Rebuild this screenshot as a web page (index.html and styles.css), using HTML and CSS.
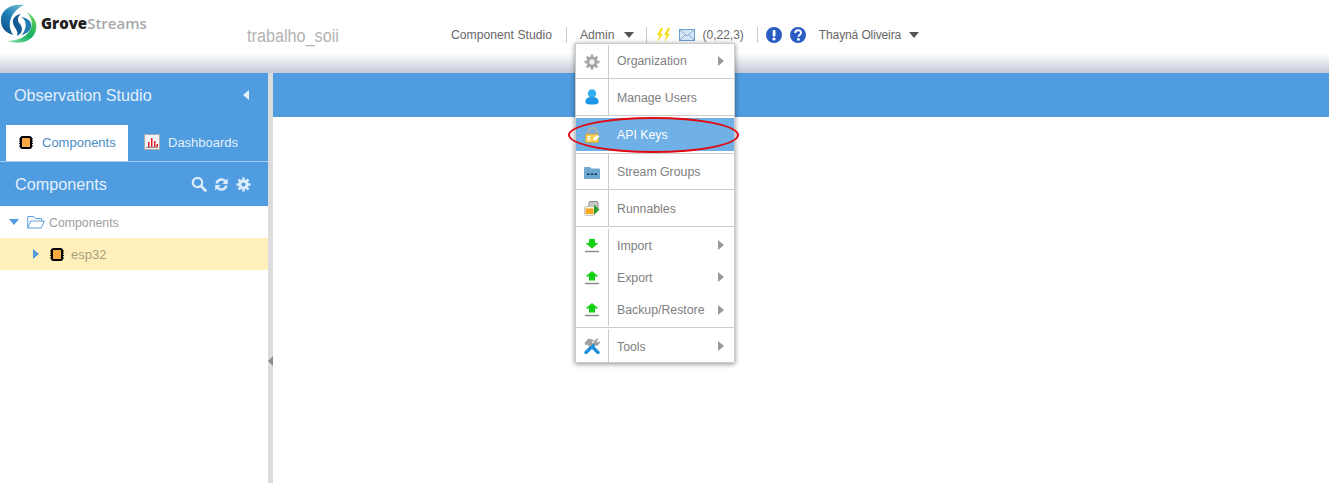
FILE: index.html
```html
<!DOCTYPE html>
<html>
  <head>
    <meta charset="utf-8">
    <title>GroveStreams</title>
    <link rel="stylesheet" href="styles.css">
  </head>
  <body>
    <div class="top">
      <div class="logo">
        <svg width="38" height="42" viewBox="0 0 38 42">
          <defs>
            <linearGradient id="swirlBlue" x1="0.800" y1="0" x2="0.200" y2="1">
              <stop offset="0" stop-color="#6fb9c8"/>
              <stop offset=".45" stop-color="#1c7fb8"/>
              <stop offset="1" stop-color="#0f4f86"/>
            </linearGradient>
            <linearGradient id="swirlGreen" x1="0.800" y1="0" x2="0.200" y2="1">
              <stop offset="0" stop-color="#6fd05a"/>
              <stop offset=".6" stop-color="#10b060"/>
              <stop offset="1" stop-color="#7fdca0"/>
            </linearGradient>
          </defs>
          <path d="M24 2C10 0 0 8 1 18c0 7 5 12 12 14-2-4-4-8-3-13 1-7 6-13 14-17z" fill="url(#swirlBlue)"/>
          <path d="M21 11c-6 1-9 5-8 9 1 5 6 8 4 13 6-3 6-8 3-12-3-3-3-7 1-10z" fill="#135c94"/>
          <path d="M21 14c4 2 6 7 4 12-1 3-2 5-4 6 7-1 11-6 10-11-1-4-4-6-10-7z" fill="#1f7db4"/>
          <path d="M26 9c5 4 7 10 5 16-3 8-12 13-24 13 13 4 26 1 29-11 2-8-3-15-10-18z" fill="url(#swirlGreen)"/>
        </svg>
        <span class="logo-text"><b>Grove</b>Streams</span>
      </div>
      <div class="project">trabalho_soii</div>
      <div class="topnav">
        <span>Component Studio</span>
        <i class="sep sep-a"></i>
        <span>Admin</span>
        <i class="caret caret-a"></i>
        <i class="sep sep-b"></i>
        <svg class="bolts" width="15" height="14" viewBox="0 0 15 14">
          <path d="M5 0 1 7h2.500L1 14l6-8H4.500L7 0zM12 0 8 7h2.500L8 14l6-8h-2.500L14 0z" fill="#f5dc14"/>
        </svg>
        <svg class="mail" width="16" height="12" viewBox="0 0 16 12">
          <rect x=".5" y=".5" width="15" height="11" fill="#d6e6f6" stroke="#6f9fd0"/>
          <path d="M1 1l7 6 7-6M1 11l5-5M15 11l-5-5" fill="none" stroke="#7fabd8"/>
        </svg>
        <span class="counts">(0,22,3)</span>
        <i class="sep sep-c"></i>
        <svg class="round" width="16" height="16" viewBox="0 0 16 16">
          <circle cx="8" cy="8" r="8" fill="#2a5cc4"/>
          <rect x="6.700" y="3" width="2.800" height="6.500" rx="1" fill="#fff"/>
          <circle cx="8" cy="12" r="1.600" fill="#fff"/>
        </svg>
        <svg class="round round-b" width="16" height="16" viewBox="0 0 16 16">
          <circle cx="8" cy="8" r="8" fill="#2a5cc4"/>
          <path d="M5.200 6c0-3.600 5.800-3.800 5.800-.3 0 2.300-2.500 2.200-2.500 4" fill="none" stroke="#fff" stroke-width="2"/>
          <circle cx="8.400" cy="12.400" r="1.400" fill="#fff"/>
        </svg>
        <span class="user">Thayná Oliveira</span>
        <i class="caret caret-b"></i>
      </div>
    </div>

    <div class="work">
      <div class="side">
        <div class="side-title">
          <span>Observation Studio</span>
          <i class="collapse"></i>
        </div>
        <div class="tabs">
          <div class="tab tab-on">
            <svg width="14" height="13" viewBox="0 0 14 13"><use href="#chip"/></svg>
            <span>Components</span>
          </div>
          <div class="tab">
            <svg width="16" height="16" viewBox="0 0 16 16">
              <rect x=".5" y=".5" width="15" height="15" fill="#f4f4f4" stroke="#aaa"/>
              <path d="M4 13V8h1.500v5zM7 13V4h1.500v9zM10 13V7h1.500v6zM12.500 13v-3H14v3z" fill="#d8202a"/>
              <path d="M2 13.500h12" stroke="#888"/>
            </svg>
            <span>Dashboards</span>
          </div>
        </div>
        <div class="side-head">
          <span>Components</span>
          <div class="head-tools">
            <svg width="16" height="16" viewBox="0 0 16 16">
              <circle cx="6.500" cy="6.500" r="4.700" fill="none" stroke="#dcecfa" stroke-width="2.200"/>
              <path d="M10 10l4.500 4.500" stroke="#dcecfa" stroke-width="2.800" stroke-linecap="round"/>
            </svg>
            <svg width="15" height="15" viewBox="0 0 15 15">
              <path d="M1.500 6.500A6 6 0 0 1 12 3.300L13.800 1.500V7H8.300l2-2A3.600 3.600 0 0 0 4 6.500zM13.500 8.500A6 6 0 0 1 3 11.700L1.200 13.500V8h5.500l-2 2A3.600 3.600 0 0 0 11 8.500z" fill="#dcecfa"/>
            </svg>
            <svg width="15" height="15" viewBox="0 0 15 15">
              <path d="M7.500 .5v14M.5 7.500h14M2.500 2.500l10 10M12.500 2.500l-10 10" stroke="#dcecfa" stroke-width="2.500"/>
              <circle cx="7.500" cy="7.500" r="5" fill="#dcecfa"/>
              <circle cx="7.500" cy="7.500" r="2" fill="#4f9ce0"/>
            </svg>
          </div>
        </div>
        <div class="tree-row">
          <i class="arrow-down"></i>
          <svg class="folder" width="18" height="14" viewBox="0 0 18 14">
            <path d="M.7 13V1.500h6l1.500 2h6.500V6M.7 13l3-7h13.600l-3 7z" fill="#fff" stroke="#5ba1de"/>
          </svg>
          <span class="tree-label">Components</span>
        </div>
        <div class="tree-row tree-picked">
          <i class="arrow-right"></i>
          <svg class="tree-chip" width="14" height="13" viewBox="0 0 14 13"><use href="#chip"/></svg>
          <span>esp32</span>
        </div>
      </div>
      <div class="split"><i class="split-arrow"></i></div>
      <div class="main">
        <div class="main-bar"></div>
      </div>
    </div>

    <div class="menu">
      <div class="item item-first">
        <div class="ico">
          <svg width="16" height="16" viewBox="0 0 16 16">
            <path d="M8 .5v15M.5 8h15M2.700 2.700l10.600 10.600M13.300 2.700 2.700 13.300" stroke="#a8a8a8" stroke-width="2.600"/>
            <circle cx="8" cy="8" r="5.500" fill="#a4a4a4"/>
            <circle cx="8" cy="8" r="2.700" fill="#f2f2f2"/>
          </svg>
        </div>
        <span>Organization</span><i class="more"></i>
      </div>
      <div class="item item-users">
        <div class="ico">
          <svg width="14" height="16" viewBox="0 0 14 16">
            <circle cx="7" cy="4.500" r="4.200" fill="#35aef2"/>
            <path d="M.5 14C0 10 2 8 7 8s7 2 6.500 6C11 16 3 16 .5 14z" fill="#1e97ea"/>
          </svg>
        </div>
        <span>Manage Users</span>
      </div>
      <div class="item item-keys">
        <div class="ico">
          <svg width="15" height="16" viewBox="0 0 15 16">
            <path d="M3.500 8V5a4 4 0 0 1 8 0v3" fill="none" stroke="#b4b0a2" stroke-width="2"/>
            <rect x=".5" y="7" width="13" height="8.500" rx="1" fill="#f7cf58" stroke="#c99a2a" stroke-width=".7"/>
            <path d="M2.500 9h3v1h-2v.8h2v1h-2v.8h2v1h-3zM8 13l1-2.500 3.500-2.500L14.500 9.500 11 13z" fill="#fff"/>
          </svg>
        </div>
        <span>API Keys</span>
      </div>
      <div class="item item-groups">
        <div class="ico">
          <svg width="16" height="14" viewBox="0 0 16 14">
            <path d="M0 3a1 1 0 0 1 1-1h5l1 1.500h8a1 1 0 0 1 1 1V13a1 1 0 0 1-1 1H1a1 1 0 0 1-1-1z" fill="#6ea8d0"/>
            <path d="M3 8.500h2.400V10H3zM6.800 8.500h2.400V10H6.800zM10.600 8.500H13V10h-2.400z" fill="#12304a"/>
          </svg>
        </div>
        <span>Stream Groups</span>
      </div>
      <div class="item item-runs">
        <div class="ico">
          <svg width="16" height="15" viewBox="0 0 16 15">
            <rect x="5" y=".5" width="9" height="7" rx="1" fill="#c8c8c8" stroke="#8a8a8a"/>
            <rect x=".5" y="5.500" width="10" height="9" rx="1" fill="#f9f3e0" stroke="#c8c8c8"/>
            <rect x="1.500" y="7.500" width="8" height="5.500" fill="#f7a81e"/>
            <path d="M10 3.500l5.500 5L10 14z" fill="#2da02d"/>
          </svg>
        </div>
        <span>Runnables</span>
      </div>
      <div class="item item-short item-top">
        <div class="ico">
          <svg width="14" height="15" viewBox="0 0 14 15"><path d="M4 1h6v4h3.500L7 10.500.5 5H4z" fill="#16d016"/><path d="M0 13.500h14" stroke="#888" stroke-width="1.400"/></svg>
        </div>
        <span>Import</span><i class="more"></i>
      </div>
      <div class="item item-short item-mid">
        <div class="ico">
          <svg width="14" height="15" viewBox="0 0 14 15"><path d="M7 1l6.500 5.500H10v4H4v-4H.5z" fill="#16d016"/><path d="M0 13.500h14" stroke="#888" stroke-width="1.400"/></svg>
        </div>
        <span>Export</span><i class="more"></i>
      </div>
      <div class="item item-short item-bottom">
        <div class="ico">
          <svg width="14" height="15" viewBox="0 0 14 15"><path d="M7 1l6.500 5.500H10v4H4v-4H.5z" fill="#16d016"/><path d="M0 13.500h14" stroke="#888" stroke-width="1.400"/></svg>
        </div>
        <span>Backup/Restore</span><i class="more"></i>
      </div>
      <div class="item item-last">
        <div class="ico">
          <svg width="16" height="16" viewBox="0 0 16 16">
            <path d="M2 14.500 10 6.500M14 14.500 6 6.500" stroke="#1d8fdc" stroke-width="3.400" stroke-linecap="round"/>
            <path d="M.5 5 4.500.5 10 2 8 4.500 9 6 6 9 3.500 6.500 2 7.500zM9.500 6l.5-3 3-2.500 1.500.5-2 2 1.500 1.500 1.500-1.500.5 2-3 3z" fill="#a2a2a2"/>
          </svg>
        </div>
        <span>Tools</span><i class="more"></i>
      </div>
    </div>
    <div class="ring"></div>

    <svg class="defs" width="0" height="0">
      <symbol id="chip" viewBox="0 0 14 13">
        <rect x="2" y="1" width="10" height="11" rx="1.500" fill="#f7a944" stroke="#000" stroke-width="2"/>
        <path d="M0 3h2M0 5.200h2M0 7.600h2M0 10h2M12 3h2M12 5.200h2M12 7.600h2M12 10h2" stroke="#000"/>
      </symbol>
    </svg>
  </body>
</html>
```

FILE: styles.css
```css
* {
  box-sizing: border-box;
}

html, body {
  margin: 0;
  height: 483px;
  overflow: hidden;
  background: #fff;
  font-family: "Liberation Sans", Arial, sans-serif;
  font-size: 12px;
  color: #666;
}

i {
  display: block;
  font-style: normal;
}

.defs {
  position: absolute;
}

/* top bar */
.top {
  height: 73px;
  display: flex;
  background: linear-gradient(#fff 0, #fff 53px, #c3c9d9 73px);
}

.logo {
  width: 247px;
  height: 44px;
  display: flex;
  padding-top: 3px;
}

.logo-text {
  margin: 11px 0 0 3px;
  font-family: "Open Sans", sans-serif;
  font-size: 15px;
  line-height: 18px;
  font-weight: 600;
  color: #a6a8ab;
}

.logo-text b {
  color: #222;
}

.project {
  width: 204px;
  padding-top: 25px;
  font-size: 18px;
  line-height: 22px;
  color: #b3b3b3;
  transform: scaleX(.9);
  transform-origin: left;
}

.topnav {
  height: 69px;
  display: flex;
  align-items: center;
  font-size: 12.200px;
  color: #666;
}

.sep {
  width: 1px;
  height: 16px;
  background: #c8c8c8;
}

.sep-a { margin: 0 13px 0 14px; }
.sep-b { margin: 0 9px 0 12px; }
.sep-c { margin: 0 8px 0 13px; }

.caret {
  border-top: 6px solid #555;
  border-left: 5.500px solid transparent;
  border-right: 5.500px solid transparent;
}

.caret-a { margin-left: 9px; }
.caret-b { margin-left: 8px; }

.mail { margin-left: 8px; }
.counts { margin-left: 8px; font-size: 12px; }
.round-b { margin-left: 8px; }
.user { margin-left: 13px; font-size: 12px; letter-spacing: -.12px; }

/* left panel */
.work {
  display: flex;
  height: 410px;
}

.side {
  width: 268px;
  background: #fff;
}

.side-title {
  height: 52px;
  display: flex;
  align-items: center;
  justify-content: space-between;
  padding: 0 19px 8px 14px;
  background: #4f9ce0;
  font-size: 16.200px;
  color: #e4f0fb;
}

.collapse {
  border-right: 6px solid #e4f0fb;
  border-top: 5px solid transparent;
  border-bottom: 5px solid transparent;
}

.tabs {
  height: 37px;
  display: flex;
  padding: 0 0 2px 6px;
  background: #4f9ce0;
  border-bottom: 1px solid #a8cdef;
}

.tab {
  display: flex;
  align-items: center;
  gap: 8px;
  padding-left: 16px;
  font-size: 13px;
  color: #e4f0fb;
}

.tab svg { flex: none; }

.tab-on {
  width: 122px;
  margin-bottom: -2px;
  padding: 0 0 2px 13px;
  gap: 9px;
  background: #fff;
  color: #4a8cc6;
}

.side-head {
  height: 44px;
  display: flex;
  align-items: center;
  justify-content: space-between;
  padding: 0 17px 0 15px;
  background: #4f9ce0;
  font-size: 16.200px;
  color: #e4f0fb;
}

.head-tools {
  display: flex;
  align-items: center;
  gap: 7px;
}

.tree-row {
  height: 32px;
  display: flex;
  align-items: center;
  padding-left: 9px;
  font-size: 12.300px;
  color: #a0a0a0;
}

.tree-label {
  padding-top: 1px;
}

.tree-picked {
  padding-left: 33px;
  background: #fff0bb;
  font-size: 13px;
  color: #a89f7c;
}

.arrow-down {
  border-top: 6px solid #4f9ce0;
  border-left: 5px solid transparent;
  border-right: 5px solid transparent;
}

.arrow-right {
  border-left: 6px solid #4f9ce0;
  border-top: 5px solid transparent;
  border-bottom: 5px solid transparent;
}

.folder { margin: 0 4px 0 8px; }
.tree-chip { margin: 0 7px 0 11px; }

.split {
  width: 5px;
  display: flex;
  align-items: center;
  background: #dcdcdc;
}

.split-arrow {
  margin-top: 166px;
  border-right: 5px solid #8c8c8c;
  border-top: 5px solid transparent;
  border-bottom: 5px solid transparent;
}

.main {
  flex: 1;
}

.main-bar {
  height: 44px;
  background: #4f9ce0;
}

/* admin dropdown */
.menu {
  position: absolute;
  left: 575px;
  top: 43px;
  width: 160px;
  height: 320px;
  padding-top: 1px;
  background: #fff;
  border: 1px solid #ccc;
  box-shadow: 0 1px 5px rgba(0, 0, 0, .45);
  font-size: 12.300px;
  color: #808080;
}

.item {
  display: flex;
  align-items: center;
  height: 36px;
  border-bottom: 1px solid #ccc;
}

.item > span {
  flex: 1;
  padding-left: 8px;
}

.ico {
  width: 33px;
  height: 100%;
  flex: none;
  display: flex;
  align-items: center;
  justify-content: center;
  border-right: 1px solid #ccc;
}

.more {
  margin-right: 10px;
  border-left: 6px solid #999;
  border-top: 5px solid transparent;
  border-bottom: 5px solid transparent;
}

.item-first { height: 34px; padding-bottom: 1px; }
.item-first .ico { height: 34px; margin-bottom: -1px; }
.item-users { height: 37px; margin-bottom: 2px; }
.item-keys {
  height: 33px;
  margin-bottom: 2px;
  border-bottom: 0;
  background: #6fb0e6;
  color: #fff;
}
.item-keys .ico { border-right-color: #6fb0e6; }
.item-groups { height: 37px; border-top: 1px solid #ccc; }
.item-runs { height: 37px; }
.item-short { height: 32px; border-bottom: 0; }
.item-top { height: 34px; padding-top: 2px; }
.item-bottom { height: 35px; padding-bottom: 1px; border-bottom: 1px solid #ccc; }
.item-last { height: 35px; padding-top: 1px; border-bottom: 0; }

.item-users > span,
.item-runs > span,
.item-top > span,
.item-mid > span,
.item-last > span {
  padding-top: 1px;
}

.ring {
  position: absolute;
  left: 568px;
  top: 117px;
  width: 171px;
  height: 36px;
  border: 2px solid #e00a14;
  border-radius: 50%;
}
```
